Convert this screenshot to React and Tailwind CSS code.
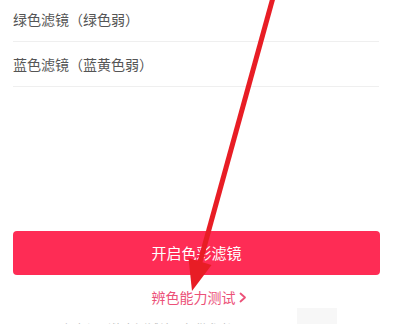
import React from "react";

export default function App() {
  const font = { fontFamily: '"Noto Sans CJK SC", "Noto Sans", sans-serif' };
  return (
    <div className="relative w-[400px] h-[324px] overflow-hidden bg-white" style={font}>
      <div className="flex flex-col pl-[13px] pr-[21px] -mt-[2px]">
        <div className="h-[44px] flex items-center border-b border-[#efefef] text-[14px] text-[#555555]">
          绿色滤镜（绿色弱）
        </div>
        <div className="h-[45px] flex items-center border-b border-[#efefef] text-[14px] text-[#555555]">
          蓝色滤镜（蓝黄色弱）
        </div>
        <div className="h-[144px]" />
        <div className="h-[44px] w-[367px] rounded-[4px] bg-[#fe2c55] flex items-center justify-center text-white text-[15px]">
          开启色彩滤镜
        </div>
        <div className="mt-[11px] h-[22px] flex items-center justify-center text-[14px] text-[#ec5178] gap-[3px] pl-[6px]">
          <span>辨色能力测试</span>
          <svg width="8" height="11" viewBox="0 0 8 11" fill="none">
            <path d="M1.5 1.5 L6 5.5 L1.5 9.5" stroke="#ec5178" strokeWidth="1.8" strokeLinecap="round" strokeLinejoin="round" />
          </svg>
        </div>
        <div className="mt-[13px] pl-[50px] text-[12px] leading-[16px] text-[#bdbdbd]">
          颜色识别能力测试结果仅供参考
        </div>
      </div>
      <div className="absolute left-[297px] top-[308px] w-[40px] h-[16px] bg-[#f7f7f7]" />
      <svg className="absolute left-0 top-0" width="400" height="324" viewBox="0 0 400 324">
        <line x1="274" y1="-6" x2="200" y2="262" stroke="#e81d25" strokeWidth="5" />
        <polygon points="188.5,258 211.5,265 192,291" fill="#e81d25" />
      </svg>
    </div>
  );
}
